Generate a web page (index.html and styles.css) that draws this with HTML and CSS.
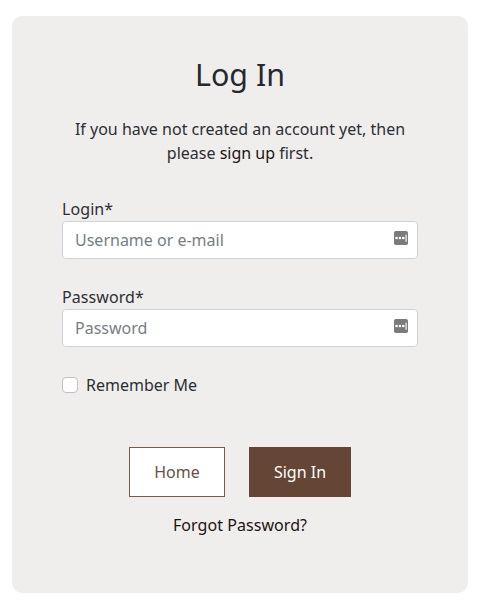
FILE: index.html
```html
<!DOCTYPE html>
<html lang="en">
<head>
<meta charset="utf-8">
<title>Log In</title>
<link rel="stylesheet" href="styles.css">
</head>
<body>
<main class="card">
  <h1>Log In</h1>
  <p class="intro">If you have not created an account yet, then<br>please <a href="#">sign up</a> first.</p>
  <form>
    <div class="field">
      <label for="login">Login*</label>
      <div class="control">
        <input id="login" type="text" placeholder="Username or e-mail">
        <svg class="key" viewBox="0 0 14 14"><rect width="14" height="14" rx="1.8" fill="#7b7b7b"/><g fill="#fff"><circle cx="2.5" cy="7" r="1.3"/><circle cx="5.9" cy="7" r="1.3"/><circle cx="9.3" cy="7" r="1.3"/><rect x="11.4" y="3.6" width="1.5" height="7.2" fill="#dedede"/></g></svg>
      </div>
    </div>
    <div class="field">
      <label for="password">Password*</label>
      <div class="control">
        <input id="password" type="password" placeholder="Password">
        <svg class="key" viewBox="0 0 14 14"><rect width="14" height="14" rx="1.8" fill="#7b7b7b"/><g fill="#fff"><circle cx="2.5" cy="7" r="1.3"/><circle cx="5.9" cy="7" r="1.3"/><circle cx="9.3" cy="7" r="1.3"/><rect x="11.4" y="3.6" width="1.5" height="7.2" fill="#dedede"/></g></svg>
      </div>
    </div>
    <label class="remember"><input type="checkbox">Remember Me</label>
    <div class="actions">
      <a class="btn" href="#">Home</a>
      <button class="btn primary" type="button">Sign In</button>
    </div>
    <a class="forgot" href="#">Forgot Password?</a>
  </form>
</main>
</body>
</html>
```
FILE: styles.css
```css
* { box-sizing: border-box; }
body {
  margin: 0;
  padding: 16px 9px 0 12px;
  background: #fff;
  color: #2b2e34;
  font: 16px/24px "Noto Sans", sans-serif;
}
.card {
  height: 577px;
  padding: 40px 50px 0;
  border-radius: 10px;
  background: #f0eeed;
}
h1 {
  margin: 0 0 23px;
  color: #25282e;
  font-size: 30.4px;
  font-weight: 400;
  line-height: 38px;
  text-align: center;
}
.intro { margin: 0 0 32px; text-align: center; }
a { color: #1d1410; text-decoration: none; }
.field { margin-bottom: 26px; }
.field label { display: block; letter-spacing: 0.08px; }
.control { position: relative; }
.control input {
  display: block;
  width: 100%;
  height: 38px;
  padding: 6px 12px;
  border: 1px solid #d0d4dc;
  border-radius: 4px;
  background: #fff;
  font: inherit;
}
.control input::placeholder { color: #767e85; opacity: 1; }
.key {
  position: absolute;
  top: 10px;
  right: 10px;
  width: 14px;
  height: 14px;
}
.remember { display: flex; align-items: center; gap: 8px; }
.remember input {
  appearance: none;
  width: 16px;
  height: 16px;
  margin: 0;
  border: 1px solid #c0bfc3;
  border-radius: 4px;
  background: #fff;
}
.actions {
  display: flex;
  justify-content: center;
  gap: 24px;
  margin-top: 50px;
}
.btn {
  width: 96px;
  height: 50px;
  padding: 0;
  border: 1px solid #775b4d;
  background: #fff;
  color: #6a5145;
  font: inherit;
  line-height: 48px;
  text-align: center;
}
.primary { width: 102px; border-color: #644536; background: #644536; color: #fff; }
.forgot { display: block; margin-top: 16px; letter-spacing: 0.06px; text-align: center; }
```
